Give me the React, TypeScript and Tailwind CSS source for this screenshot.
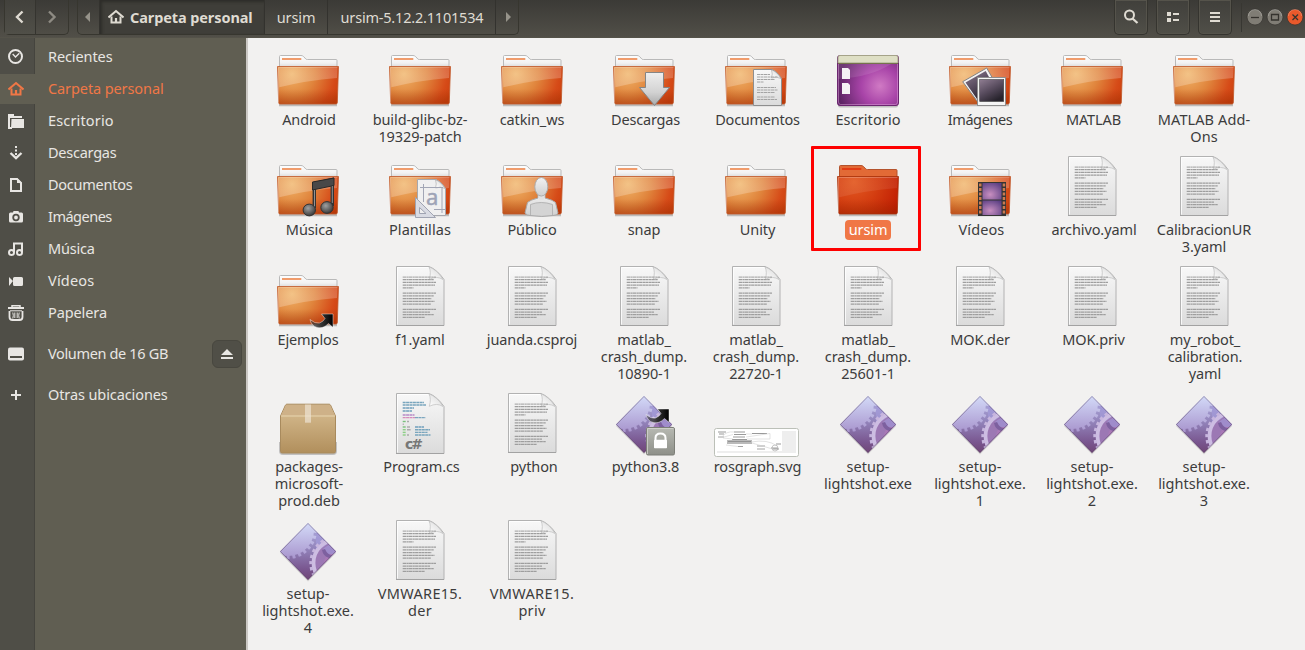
import React from "react";

type Kind =
  | "folder" | "download" | "documents" | "desktop" | "pictures" | "music" | "templates" | "public"
  | "selected" | "videos" | "text" | "link" | "package" | "csharp" | "locked" | "thumb" | "exe";

const items: { kind: Kind; lines: string[]; cls?: string }[] = [
  { kind: "folder", lines: ["Android"], cls: "pl-[2px]" },
  { kind: "folder", lines: ["build-glibc-bz-", "19329-patch"] },
  { kind: "folder", lines: ["catkin_ws"] },
  { kind: "download", lines: ["Descargas"], cls: "pl-[3px] tracking-[-0.2px]" },
  { kind: "documents", lines: ["Documentos"], cls: "pl-[3px] tracking-[-0.25px]" },
  { kind: "desktop", lines: ["Escritorio"], cls: "tracking-[0.1px]" },
  { kind: "pictures", lines: ["Imágenes"], cls: "tracking-[-0.4px]" },
  { kind: "folder", lines: ["MATLAB"], cls: "pl-[3px]" },
  { kind: "folder", lines: ["MATLAB Add-", "Ons"], cls: "tracking-[0.1px]" },
  { kind: "music", lines: ["Música"], cls: "pl-[3px]" },
  { kind: "templates", lines: ["Plantillas"], cls: "tracking-[0.1px]" },
  { kind: "public", lines: ["Público"] },
  { kind: "folder", lines: ["snap"] },
  { kind: "folder", lines: ["Unity"], cls: "pl-[3px]" },
  { kind: "selected", lines: ["ursim"] },
  { kind: "videos", lines: ["Vídeos"], cls: "pl-[3px] tracking-[0.1px]" },
  { kind: "text", lines: ["archivo.yaml"], cls: "pl-[4px]" },
  { kind: "text", lines: ["CalibracionUR", "3.yaml"] },
  { kind: "link", lines: ["Ejemplos"] },
  { kind: "text", lines: ["f1.yaml"] },
  { kind: "text", lines: ["juanda.csproj"] },
  { kind: "text", lines: ["matlab_", "crash_dump.", "10890-1"] },
  { kind: "text", lines: ["matlab_", "crash_dump.", "22720-1"] },
  { kind: "text", lines: ["matlab_", "crash_dump.", "25601-1"] },
  { kind: "text", lines: ["MOK.der"] },
  { kind: "text", lines: ["MOK.priv"], cls: "pl-[3px]" },
  { kind: "text", lines: ["my_robot_", "calibration.", "yaml"], cls: "pl-[2px]" },
  { kind: "package", lines: ["packages-", "microsoft-", "prod.deb"], cls: "pl-[2px]" },
  { kind: "csharp", lines: ["Program.cs"], cls: "pl-[3px]" },
  { kind: "text", lines: ["python"], cls: "pl-[4px]" },
  { kind: "locked", lines: ["python3.8"], cls: "pl-[3px]" },
  { kind: "thumb", lines: ["rosgraph.svg"], cls: "pl-[3px] tracking-[-0.15px]" },
  { kind: "exe", lines: ["setup-", "lightshot.exe"], cls: "tracking-[0px]" },
  { kind: "exe", lines: ["setup-", "lightshot.exe.", "1"], cls: "tracking-[0px]" },
  { kind: "exe", lines: ["setup-", "lightshot.exe.", "2"], cls: "tracking-[0px]" },
  { kind: "exe", lines: ["setup-", "lightshot.exe.", "3"], cls: "tracking-[0px]" },
  { kind: "exe", lines: ["setup-", "lightshot.exe.", "4"], cls: "tracking-[0px]" },
  { kind: "text", lines: ["VMWARE15.", "der"], cls: "tracking-[0.3px]" },
  { kind: "text", lines: ["VMWARE15.", "priv"], cls: "tracking-[0.3px]" },
];

function Defs() {
  return (
    <svg width="0" height="0" className="absolute">
      <defs>
        <radialGradient id="body" gradientUnits="userSpaceOnUse" cx="16" cy="30" r="50">
          <stop offset="0" stopColor="#f0b468" />
          <stop offset="0.45" stopColor="#e0843c" />
          <stop offset="0.85" stopColor="#d64b18" />
          <stop offset="1" stopColor="#ce420f" />
        </radialGradient>
        <radialGradient id="bodySel" gradientUnits="userSpaceOnUse" cx="18" cy="28" r="50">
          <stop offset="0" stopColor="#e25a22" />
          <stop offset="0.5" stopColor="#d33c10" />
          <stop offset="1" stopColor="#c01c02" />
        </radialGradient>
        <linearGradient id="lower" x1="0" x2="0" y1="0" y2="1">
          <stop offset="0.6" stopColor="#8c2800" stopOpacity="0" />
          <stop offset="1" stopColor="#8c2800" stopOpacity="0.38" />
        </linearGradient>
        <linearGradient id="sheen" x1="0" x2="0" y1="0" y2="1">
          <stop offset="0" stopColor="#fff" stopOpacity="0.18" />
          <stop offset="1" stopColor="#fff" stopOpacity="0.24" />
        </linearGradient>
        <linearGradient id="tab" x1="0" x2="0" y1="0" y2="1">
          <stop offset="0" stopColor="#fefefe" />
          <stop offset="0.6" stopColor="#f2f2f2" />
          <stop offset="1" stopColor="#d4d4d4" />
        </linearGradient>
        <linearGradient id="paper" x1="0" x2="0" y1="0" y2="1">
          <stop offset="0" stopColor="#f8f8f8" />
          <stop offset="1" stopColor="#dbdbdb" />
        </linearGradient>
        <linearGradient id="fold" x1="0" x2="1" y1="1" y2="0">
          <stop offset="0" stopColor="#ffffff" />
          <stop offset="0.55" stopColor="#e8e8e8" />
          <stop offset="1" stopColor="#bcbcbc" />
        </linearGradient>
        <linearGradient id="silver" x1="0" x2="0" y1="0" y2="1">
          <stop offset="0" stopColor="#eeeeee" />
          <stop offset="0.6" stopColor="#d2d2d2" />
          <stop offset="1" stopColor="#a9a9a9" />
        </linearGradient>
        <linearGradient id="bust" x1="0" x2="0" y1="0" y2="1">
          <stop offset="0" stopColor="#f2f2f2" />
          <stop offset="1" stopColor="#cfcfcf" />
        </linearGradient>
        <radialGradient id="desk" gradientUnits="userSpaceOnUse" cx="44" cy="42" r="42">
          <stop offset="0" stopColor="#d07ac4" />
          <stop offset="0.45" stopColor="#a844a8" />
          <stop offset="1" stopColor="#5e2465" />
        </radialGradient>
        <linearGradient id="photo" x1="0" x2="0.6" y1="0" y2="1">
          <stop offset="0" stopColor="#8f7d92" />
          <stop offset="0.55" stopColor="#564a5c" />
          <stop offset="1" stopColor="#27232c" />
        </linearGradient>
        <radialGradient id="ball" cx="0.4" cy="0.35" r="0.65">
          <stop offset="0" stopColor="#a0a0a0" />
          <stop offset="1" stopColor="#3c3c3c" />
        </radialGradient>
        <radialGradient id="film" cx="0.4" cy="0.7" r="0.8">
          <stop offset="0" stopColor="#c88fc0" />
          <stop offset="1" stopColor="#5c4084" />
        </radialGradient>
        <linearGradient id="arrow" x1="0" x2="1" y1="0" y2="0">
          <stop offset="0" stopColor="#333" stopOpacity="0.5" />
          <stop offset="0.5" stopColor="#333" />
          <stop offset="1" stopColor="#000" />
        </linearGradient>
        <linearGradient id="box" x1="0" x2="0" y1="0" y2="1">
          <stop offset="0" stopColor="#d9bf94" />
          <stop offset="1" stopColor="#b18f5c" />
        </linearGradient>
        <linearGradient id="gem" x1="0" x2="0" y1="0" y2="1">
          <stop offset="0.05" stopColor="#b3b3e6" />
          <stop offset="0.5" stopColor="#9181b8" />
          <stop offset="0.8" stopColor="#79568f" />
          <stop offset="1" stopColor="#6e4372" />
        </linearGradient>
        <linearGradient id="gear" gradientUnits="userSpaceOnUse" x1="0" x2="0" y1="5" y2="42">
          <stop offset="0" stopColor="#d3daf8" />
          <stop offset="1" stopColor="#a793cc" />
        </linearGradient>
        <linearGradient id="lock" x1="0" x2="0" y1="0" y2="1">
          <stop offset="0" stopColor="#b7b9b2" />
          <stop offset="1" stopColor="#8e9089" />
        </linearGradient>
        <clipPath id="diamond"><path d="M32 5 60 33.5 32 62 4 33.5z" /></clipPath>
      </defs>
    </svg>
  );
}

function Folder({ selected = false }: { selected?: boolean }) {
  return (
    <g>
      <path d="M3 61.200h58" stroke="#000" strokeOpacity="0.22" strokeWidth="2.200" />
      <path
        d="M3.500 24V12.500q0-1 1-1H25q1.500 0 2.500 1l2.500 2.700q.5.3 1.500.3H60q1 0 1 1V24z"
        fill={selected ? "#e26a36" : "url(#tab)"}
        stroke={selected ? "#b4532d" : "#b9b9b9"}
      />
      <path d="M6 15h19.300" stroke={selected ? "#e23c14" : "#f09c6c"} strokeWidth="2" />
      <path d="M1.500 22.500h61L61.300 58.700q-.1 1.300-1.300 1.300H4q-1.200 0-1.300-1.300z" fill={selected ? "url(#bodySel)" : "url(#body)"} />
      <path d="M1.500 22.500h61L61.300 58.700q-.1 1.300-1.300 1.300H4q-1.200 0-1.300-1.300z" fill="url(#lower)" stroke={selected ? "#a8330c" : "#c0592a"} strokeOpacity="0.8" />
      <path d="M2.500 23.500h59L61 34Q30 36.500 3.300 43.300z" fill="url(#sheen)" opacity={selected ? 0.35 : 1} />
      <path d="M2.500 58.500V23.500h59" fill="none" stroke="#fff" strokeOpacity="0.25" />
    </g>
  );
}

function Sheet({ code = false }: { code?: boolean }) {
  const h = code ? 62.5 : 61.5;
  const rows = [
    [13, 48], [15.7, 46], [18.4, 48], [21.1, 47], [23.8, 25.5], [29.2, 48], [31.9, 46], [34.6, 43.5],
    [37.3, 46.5], [40, 43], [45.3, 48], [48, 42], [50.7, 46], [53.3, 37],
  ];
  const marks: [number, number, number, string][] = [
    [11.5, 14.7, 36, "#78a5bd"], [14, 14.7, 38, "#78a5bd"], [17, 14.7, 26, "#6f9fbc"], [20, 14.7, 24, "#6f9fbc"],
    [24, 14.7, 26.5, "#b78bc8"], [26.6, 14.7, 27, "#d68abb"], [26.6, 27, 37.5, "#7ca6bf"], [30.5, 14.7, 18, "#79c07c"],
    [30.5, 19, 21, "#aaa"], [33.3, 14.7, 15.8, "#aaa"], [36, 14.7, 18, "#79c07c"], [36, 19, 22, "#aaa"], [36, 27, 36, "#6f9fbc"],
    [38.7, 14.7, 18, "#8bcf85"], [38.7, 19, 23, "#aaa"], [38.7, 27, 42, "#78a5bd"], [41.4, 14.7, 18, "#8bcf85"],
    [41.4, 27, 39.5, "#78a5bd"], [44, 14.7, 18, "#8bcf85"], [44, 19, 21, "#aaa"], [44, 27, 42.5, "#78a5bd"],
  ];
  return (
    <g>
      <path d={`M8.500 2.500H41q8 3 15 13V${h}H8.500z`} fill="url(#paper)" stroke="#b2b2b2" />
      <path d={`M9.500 ${h - 1}V3.500H41`} fill="none" stroke="#fff" strokeOpacity="0.8" />
      <path d="M41 3q2.500 5 .3 12.300Q49 11.500 55 15.500 49 5.500 41 3z" fill="url(#fold)" stroke="#bdbdbd" strokeWidth="0.7" />
      <path d={`M8 ${h}H56`} stroke="#a2a2a2" />
      {code
        ? marks.map(([y, a, b, c], i) => <path key={i} d={`M${a} ${y}H${b}`} stroke={c} strokeWidth="1.400" strokeDasharray="3 .4" />)
        : rows.map(([y, x], i) => (
            <path key={i} d={`M14.700 ${y}H${x}`} stroke="#9e9e9e" strokeOpacity={i === 0 ? 0.8 : 1} strokeWidth="1.250" strokeDasharray="3.300 .4 2.200 .3" />
          ))}
      {code && (
        <text x="17" y="57.500" fontSize="14" fontWeight="700" fill="#777" fontFamily="DejaVu Sans, sans-serif" textLength="18">c#</text>
      )}
    </g>
  );
}

function LinkArrow({ dy = 0 }: { dy?: number }) {
  return (
    <path
      transform={`translate(0 ${dy})`}
      d="M45.500 50H57V63.300L52.500 59.500Q47 65 41 63.500 35.500 62 34 55.500 39 60 43.500 59 47.500 57.500 49 54.500z"
      fill="url(#arrow)"
      stroke="#fff"
      strokeOpacity="0.55"
      strokeWidth="0.8"
    />
  );
}

function Gem() {
  return (
    <g>
      <path d="M32 6.500 60 35 32 63.500 4 35z" fill="#000" opacity="0.13" />
      <g clipPath="url(#diamond)">
        <path d="M0 0h64v64H0z" fill="url(#gem)" />
        <circle cx="61" cy="45" r="23" fill="#9c78b4" />
        <path d="M40 10 62 30 52 26 40 34z" fill="#a29ad8" opacity="0.7" />
        <circle cx="62" cy="46" r="14" fill="#a878b6" />
        <path d="M47 31q6-6 16-6v14q-6-5-14-2z" fill="#9f8ccb" />
        <path d="M46 32q1 6 7 8l4-3q-5 1-8-6z" fill="#7d609f" />
        <circle cx="12" cy="12" r="26" fill="url(#gear)" />
        <circle cx="12" cy="12" r="27" fill="none" stroke="url(#gear)" strokeWidth="4" strokeDasharray="2.900 2.900" />
        <circle cx="61" cy="45" r="23.500" fill="none" stroke="#cdbde2" strokeWidth="3.800" />
        <circle cx="61" cy="45" r="26.200" fill="none" stroke="#c7b6de" strokeWidth="3" strokeDasharray="3.200 3" />
      </g>
      <path d="M32 5.500 59.500 33.500 32 61.500 4.500 33.500z" fill="none" stroke="#53405f" strokeOpacity="0.45" strokeWidth="0.9" />
    </g>
  );
}

function Art({ kind }: { kind: Kind }) {
  switch (kind) {
    case "folder":
      return <Folder />;
    case "selected":
      return <Folder selected />;
    case "text":
      return <Sheet />;
    case "csharp":
      return <Sheet code />;
    case "exe":
      return <Gem />;
    case "download":
      return (
        <g>
          <Folder />
          <path d="M33.500 28.500h18V43.500h6L42.500 61.500 27.500 43.500h6z" fill="url(#silver)" stroke="#858585" />
        </g>
      );
    case "documents":
      return (
        <g>
          <Folder />
          <path d="M29.500 25.500H48q5 2 9.500 9V61.500h-28z" fill="url(#paper)" stroke="#8e8e8e" />
          <path d="M47.500 26q1.500 4 0 8 5-2 9.500.5Q52.500 27 47.500 26z" fill="url(#fold)" stroke="#a5a5a5" strokeWidth=".6" />
          {[30.5, 33, 35.5, 38, 43.5, 46, 48.5, 53, 55.5].map((y, i) => (
            <path key={y} d={`M33 ${y}H${[46, 54, 51, 40, 52, 54, 51, 51, 53][i]}`} stroke="#a4a4a4" strokeDasharray="3 .5" />
          ))}
        </g>
      );
    case "desktop":
      return (
        <g>
          <rect x="2" y="59" width="60" height="4.500" rx="2" fill="#000" opacity=".2" />
          <rect x="1.500" y="11.500" width="61" height="50" rx="2.500" fill="url(#desk)" stroke="#6b2570" />
          <path d="M2 35Q35 33 55 20H2z" fill="#fff" opacity=".1" />
          <path d="M2 19V13.500q0-2 2-2h56q2 0 2 2V19z" fill="#dedfc4" stroke="#a5a388" />
          <path d="M2 19.500h60" stroke="#76734d" />
          <path d="M2.500 20V58q0 2.500 2 2.500h55q2 0 2-2.500V20" fill="none" stroke="#dba0d8" strokeOpacity=".5" />
          <path d="M6 24h6l2 2v9H6zM6 39h6l2 2v9H6z" fill="#f5f1f5" />
        </g>
      );
    case "pictures":
      return (
        <g>
          <Folder />
          <path d="M14.700 37.700 38.700 24 53 49 32 61z" fill="#f3f3f3" stroke="#858585" />
          <path d="M17.500 38.500 37.700 27 47 44 29 55z" fill="url(#photo)" />
          <rect x="29.500" y="33.500" width="28" height="28" fill="#f5f5f5" stroke="#8e8e8e" />
          <rect x="31.700" y="35.500" width="24" height="22" fill="url(#photo)" stroke="#444" strokeWidth=".6" />
        </g>
      );
    case "music":
      return (
        <g>
          <Folder />
          <path d="M38.300 54V29.500L56.300 25.500V52" fill="none" stroke="#333" strokeWidth="3.400" />
          <path d="M36.500 28 58 24V31.500L36.500 36z" fill="#484848" stroke="#292929" />
          <path d="M38.500 36V53M56.300 32V49" stroke="#929292" />
          <ellipse cx="33.300" cy="56" rx="6.200" ry="5.900" fill="url(#ball)" stroke="#333" />
          <ellipse cx="51" cy="53.500" rx="6.200" ry="5.900" fill="url(#ball)" stroke="#333" />
        </g>
      );
    case "templates":
      return (
        <g>
          <Folder />
          <path d="M29.500 25.500H48q5 2 9.500 9V61.500h-28z" fill="#f0f0f0" stroke="#a6a8ae" />
          <path d="M47.500 26q1.500 4 0 8 5-2 9.500.5Q52.500 27 47.500 26z" fill="url(#fold)" stroke="#aaa" strokeWidth=".6" />
          <path d="M32 33.500H55M35.500 30V48M54 33V59M46 55.500H57" stroke="#a2a6b5" fill="none" />
          <text x="38" y="51" fontSize="22" fill="#9ea4b7" stroke="#9ea4b7" strokeWidth=".5" fontFamily="Noto Sans, sans-serif">a</text>
          <path d="M27.500 43.500V63.500H47.500zM31.500 53.500V59.500H38z" fill="#d9dbe3" fillRule="evenodd" stroke="#a0a4b2" />
        </g>
      );
    case "public":
      return (
        <g>
          <Folder />
          <path d="M38 39v5q-8 2-10.500 4.500L25 59q2 2.500 5 2.500 12 2 23 0 4 0 5-2.500l-2.500-10.500Q53 46 45 44v-5z" fill="url(#bust)" stroke="#a9a9a9" />
          <path d="M30.500 61V50.500Q41 46.500 52.500 50.500V61" fill="#d4d4d4" stroke="#b4b4b4" />
          <path d="M38.500 41q3 3 6 0v4q-3 2-6 0z" fill="#e2e2e2" />
          <ellipse cx="41.300" cy="32.800" rx="6.500" ry="9.300" fill="url(#bust)" stroke="#acacac" />
        </g>
      );
    case "videos":
      return (
        <g>
          <Folder />
          <path d="M30 28H58V62H30z" fill="#343434" />
          <rect x="34.500" y="29" width="19" height="16.500" fill="url(#film)" />
          <rect x="34.500" y="46.500" width="19" height="14.500" fill="url(#film)" />
          {[29.5, 34, 38.5, 43, 47.5, 52, 56.5].map((y) => (
            <path key={y} d={`M31 ${y}h2.500v3H31zM54.700 ${y}h2.500v3h-2.500z`} fill="#c97b52" />
          ))}
        </g>
      );
    case "link":
      return (
        <g>
          <Folder />
          <LinkArrow />
        </g>
      );
    case "package":
      return (
        <g>
          <path d="M3 51v9q0 4 4 4h50q4 0 4-4v-9z" fill="#000" opacity=".2" />
          <path d="M9.500 14q.5-.8 1.500-.8H53q1 0 1.500.8L59.500 25v35.500q0 1.500-1.500 1.500H6q-1.500 0-1.500-1.500V25z" fill="url(#box)" stroke="#a88a5d" />
          <path d="M10 14H54L59 24.500H5z" fill="#ceb188" />
          <path d="M5 25H59" stroke="#e8d5b0" />
          <path d="M29 13.500H35V31.700H29z" fill="#efe6d8" opacity=".65" />
        </g>
      );
    case "locked":
      return (
        <g>
          <Gem />
          <LinkArrow dy={-32} />
          <rect x="34.500" y="36.500" width="28" height="27.500" rx="1.500" fill="url(#lock)" stroke="#7d7f78" />
          <path d="M35.500 63V37.500H61.500" fill="none" stroke="#d8d9d4" strokeOpacity=".7" />
          <path d="M43.500 50V47q0-4.500 5-4.500t5 4.500v3" fill="none" stroke="#fff" strokeWidth="2" />
          <rect x="42" y="48.700" width="13" height="8.500" rx=".7" fill="#fff" />
        </g>
      );
    case "thumb":
      return (
        <g>
          <rect x="-9.500" y="37.500" width="84" height="28" rx="2" fill="#fff" stroke="#bcc0b8" />
          <path d="M58 40H72V62H-7V60H58z" fill="#eeeeee" />
          <path d="M-6 41H2M-5 43H0M10 41H21M10 43.500H22M9 46H21M28 42.500H43M8 48.500H23M52 53h5M49 58h6" stroke="#999" strokeWidth="1.200" />
          <path d="M3 49H28V53H3z" fill="#bababa" />
          <path d="M4 50.500H27M14 55.500H19M33 55H41M33 58H41M47 57H54M-6 46H0" stroke="#8a8a8a" strokeWidth=".8" />
          <path d="M-2 46Q2 40 10 41M0 46 9 43.500M-1 47 9 48M22 43H28M22 46 46 42.500V48H23M27 51Q44 48 53 55M28 52 52 59M2 54 14 55.500" fill="none" stroke="#d0d0d0" strokeWidth=".6" />
          <circle cx="51" cy="57" r="3" fill="none" stroke="#aaa" strokeWidth=".6" />
        </g>
      );
  }
}

type SideIcon = "clock" | "home" | "folder" | "down" | "doc" | "camera" | "music" | "video" | "trash" | "disk" | "plus";

function Symbolic({ name }: { name: SideIcon }) {
  return (
    <svg width="16" height="16" viewBox="0 0 16 16" fill="none" stroke="currentColor" strokeWidth="2">
      {name === "clock" && (<><circle cx="7.500" cy="7.500" r="6.500" /><path d="M4.700 5 7.500 8 11.300 4.300" strokeWidth="1.400" /></>)}
      {name === "home" && (<><path d="M.5 8.500 8 2l7.500 6.500" /><path d="M3.500 7.500v6h9v-6" /><path d="M8 9v5" strokeWidth="2.200" /></>)}
      {name === "folder" && (<><path d="M0 1h6v2h8v2H2v9l-2-1z" fill="currentColor" stroke="none" /><path d="M3.500 6H16v9H3z" fill="currentColor" stroke="none" /><path d="M1 4v11h3" /></>)}
      {name === "down" && (<><path d="M8 1v9" strokeDasharray="2 1.500" /><path d="M2.500 8 8 13.200 13.500 8" strokeWidth="2.300" /></>)}
      {name === "doc" && (<><path d="M3 2h6l4 4v8H3z" /><path d="M9 1v5h5z" fill="currentColor" stroke="none" /></>)}
      {name === "camera" && (<><path d="M1 5q0-1.500 1.500-1.500H5l.5-1.500h5l.5 1.500h2.500Q15 3.500 15 5v7q0 1.500-1.500 1.500h-11Q1 13.500 1 12z" fill="currentColor" stroke="none" /><circle cx="8" cy="8.500" r="2.800" stroke="#4f4e47" strokeWidth="1.800" /></>)}
      {name === "music" && (<><circle cx="3.500" cy="11.500" r="2.500" /><circle cx="11.500" cy="11.500" r="2.500" /><path d="M6 11V2.500h8V11" /></>)}
      {name === "video" && (<path d="M1 4l4 4-4 5zM5 5.500Q5 4 6.500 4h7Q15 4 15 5.500v6q0 1.500-1.500 1.500h-7Q5 13 5 11.500z" fill="currentColor" stroke="none" />)}
      {name === "trash" && (<><path d="M0 3h16" /><path d="M4 2.500V.8h8v1.700" strokeWidth="1.500" /><path d="M1.500 6v6q0 3 3 3h7q3 0 3-3V6" strokeWidth="1.800" /><path d="M2 5.800h12M4.800 7.500q1 3 0 6M6.800 7.500v5.500M9.200 7.500v5.500M11.200 7.500q-1 3 0 6" strokeWidth="1" /></>)}
      {name === "disk" && (<><rect x="0" y="1.500" width="16" height="13" rx="2" fill="currentColor" stroke="none" /><path d="M2 11h12" stroke="#4f4e47" /></>)}
      {name === "plus" && <path d="M8 3v10M3 8h10" />}
    </svg>
  );
}

const places: { icon: SideIcon; name: string; cls?: string }[] = [
  { icon: "clock", name: "Recientes" },
  { icon: "home", name: "Carpeta personal" },
  { icon: "folder", name: "Escritorio", cls: "tracking-[0.15px]" },
  { icon: "down", name: "Descargas", cls: "tracking-[-0.25px]" },
  { icon: "doc", name: "Documentos", cls: "tracking-[-0.25px]" },
  { icon: "camera", name: "Imágenes", cls: "tracking-[-0.5px]" },
  { icon: "music", name: "Música", cls: "tracking-[-0.2px]" },
  { icon: "video", name: "Vídeos", cls: "tracking-[0.2px]" },
  { icon: "trash", name: "Papelera" },
  { icon: "disk", name: "Volumen de 16 GB", cls: "tracking-[-0.35px]" },
  { icon: "plus", name: "Otras ubicaciones" },
];

function Sidebar() {
  return (
    <aside className="flex w-[248px] shrink-0 flex-col gap-[2px] border-r-2 border-[#cbc8c4] bg-[linear-gradient(to_right,#4f4e47_34px,#45443e_34px,#45443e_35px,#605e52_35px)] pt-1">
      {places.map((p, i) => (
        <div
          key={p.name}
          className={
            "flex h-[30px] shrink-0 items-center " +
            (i === 1 ? "bg-[#605e52] text-[#f07746]" : "text-[#e8e6e3]") +
            (i > 8 ? " mt-[9px]" : "")
          }
        >
          <span className="flex w-[48px] shrink-0 pl-2"><Symbolic name={p.icon} /></span>
          <span className={"flex-1 whitespace-nowrap pb-[2px] " + (p.cls ?? "")}>{p.name}</span>
          {p.icon === "disk" && (
            <span className="mr-1 flex h-7 w-[30px] items-center justify-center rounded-md border border-[#48473f] bg-[#504f47]">
              <svg width="12" height="12" fill="currentColor"><path d="M0 7 6 1l6 6zM0 9h12v2H0z" /></svg>
            </span>
          )}
        </div>
      ))}
    </aside>
  );
}

const tool = "flex h-[35px] w-[34px] items-center justify-center rounded-b-[5px] border border-t-0 border-[#35342f] bg-[linear-gradient(#403f3b,#504f48)] shadow-[inset_0_0_0_1px_#55534b]";

function Header() {
  return (
    <header className="flex h-[38px] shrink-0 items-start border-b border-[#545249] bg-[linear-gradient(#3b3a36,#514f48)] text-[#dfdbd2]">
      <div className="ml-1 flex h-[35px] w-[65px] rounded-b-[5px] border border-t-0 border-[#37362f]">
        <span className="flex w-[31px] items-center justify-center border-r border-[#35342f] bg-[linear-gradient(#42413c,#504f48)]">
          <svg width="10" height="14" fill="none" stroke="currentColor" strokeWidth="2.400"><path d="M7.500 1.500 2 7 7.500 12.500" /></svg>
        </span>
        <span className="flex flex-1 items-center justify-center text-[#8e8b83]">
          <svg width="10" height="14" fill="none" stroke="currentColor" strokeWidth="2.400"><path d="M2 1.500 7.500 7 2 12.500" /></svg>
        </span>
      </div>
      <nav className="ml-2 flex h-[35px] w-[442px] overflow-hidden rounded-b-[5px] border border-t-0 border-[#37362f]">
        <span className="flex w-[21px] items-center justify-center pr-[2px] text-[#96938a]">
          <svg width="5" height="10" fill="currentColor"><path d="M5 0v10L0 5z" /></svg>
        </span>
        <span className="flex w-[166px] items-center border-x border-[#33322e] bg-[#3f3e39] pl-2 text-[14.500px] font-bold shadow-[inset_2px_2px_3px_#2e2d29]">
          <Symbolic name="home" />
          <span className="ml-[6px] whitespace-nowrap">Carpeta personal</span>
        </span>
        <span className="flex w-[63px] items-center justify-center border-r border-[#33322e]">ursim</span>
        <span className="flex w-[168px] items-center justify-center border-r border-[#33322e] pl-[1px] tracking-[-0.2px]">ursim-5.12.2.1101534</span>
        <span className="flex flex-1 items-center justify-center pl-[2px] text-[#96938a]">
          <svg width="5" height="10" fill="currentColor"><path d="M0 0v10l5-5z" /></svg>
        </span>
      </nav>
      <div className="ml-auto flex gap-2">
        <span className={tool}>
          <svg width="16" height="16" fill="none" stroke="currentColor"><circle cx="6.500" cy="6" r="4.500" strokeWidth="2" /><path d="m9.500 9.500 5 4.500" strokeWidth="2.300" /></svg>
        </span>
        <span className={tool}>
          <svg width="14" height="14" fill="currentColor"><path d="M1 2h4v4H1zM1 8h4v4H1zM7 3h6v2H7zM7 9h6v2H7z" /></svg>
        </span>
        <span className={tool}>
          <svg width="12" height="12" fill="currentColor"><path d="M1 1h10v2H1zM1 5h10v2H1zM1 9h10v2H1z" /></svg>
        </span>
      </div>
      <div className="ml-[9px] mt-[3px] flex h-[29px] items-center gap-1 border-l border-[#383732] pb-[1px] pl-[5px]">
        {["M4 8.500h8", "M4.500 5.500h7v5.500h-7z", "m5.500 5.500 5.500 5.500M11 5.500 5.500 11"].map((d, i) => (
          <svg key={d} width="16" height="16" viewBox="0 0 16 16" fill="none" className="overflow-visible">
            <circle cx="8" cy="8" r="8" fill={i === 2 ? "#e9592b" : "#807d75"} stroke="#35342f" strokeWidth=".7" />
            <path d="M1.500 7a6.500 6.500 0 0 1 13 0" stroke="#fff" strokeOpacity=".22" />
            <path d={d} stroke="#35332e" strokeWidth="1.300" />
          </svg>
        ))}
      </div>
      <div className="w-[2px]" />
    </header>
  );
}

export default function App() {
  return (
    <div className="relative flex h-[650px] w-[1305px] flex-col overflow-hidden bg-[#f2f1f0] font-['Noto_Sans',sans-serif] text-[14.500px] leading-[17px] tracking-[-0.1px]">
      <Defs />
      <Header />
      <div className="flex min-h-0 flex-1">
        <Sidebar />
        <main className="grid flex-1 grid-cols-[repeat(9,112px)] content-start gap-y-[9px] pl-1 pt-[6px] text-[#3c3c3c]">
          {items.map((it, i) => (
            <div key={i} className="flex flex-col items-center">
              <svg width="64" height="64" viewBox="0 0 64 64" className="mb-[3px] shrink-0 overflow-visible"><Art kind={it.kind} /></svg>
              {it.kind === "selected" ? (
                <span className="-mt-[1px] flex h-[20px] w-[46px] items-center justify-center rounded-[4px] bg-[#f07746] pb-[1px] text-white">{it.lines[0]}</span>
              ) : (
                it.lines.map((l) => <span key={l} className={"h-[17px] whitespace-nowrap " + (it.cls ?? "")}>{l}</span>)
              )}
            </div>
          ))}
        </main>
      </div>
      <div className="absolute left-[811px] top-[146px] h-[105px] w-[110px] rounded-[1px] border-3 border-[#fe0000]" />
    </div>
  );
}
